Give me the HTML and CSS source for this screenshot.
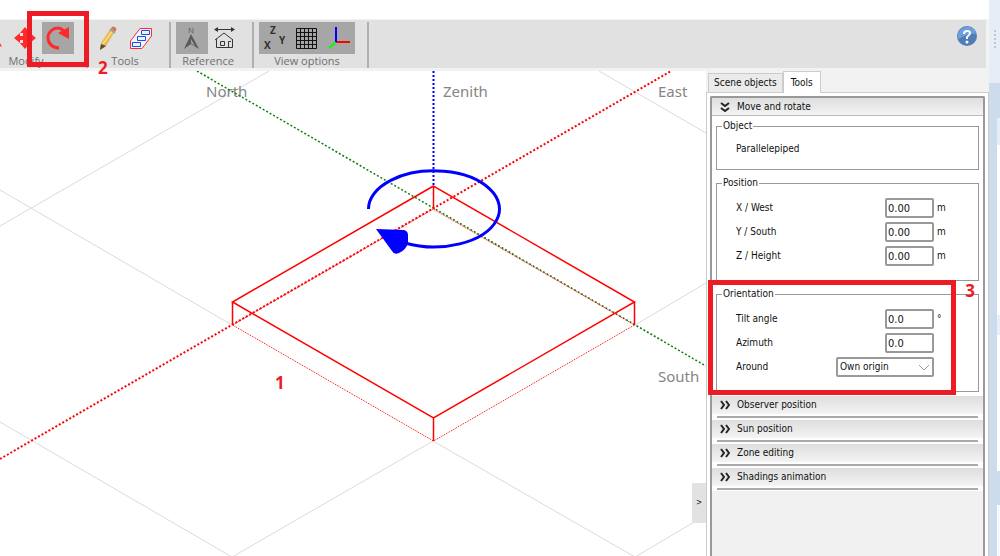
FILE: index.html
```
<!doctype html>
<html lang="en">
<head>
<meta charset="utf-8">
<title>Scene editor</title>
<link rel="stylesheet" href="styles.css">
</head>

<body>
<div class="app">
	<div class="topbar"></div>
	<div class="toolbar">
		<div class="group group_cut">
			<div class="btns">
				<button type="button" aria-label="Select"><svg width="32" height="32"><path d="M18 13L24 25L20 23L16 26z" fill="#ff2a2a"/></svg></button>
				<button type="button" aria-label="Move"><svg width="32" height="32"><path d="M15 5L20 11H17V14H20V11L26 16L20 21V18H17V21H20L15 27L10 21H13V18H10V21L4 16L10 11V14H13V11H10z" fill="#ff2a2a"/></svg></button>
				<span class="marked">
					<button type="button" class="on" aria-label="Rotate"><svg width="32" height="32"><path d="M17 26C11 26 6 22 6 16C6 10 11 6 16 6Q19 6 22 9" fill="none" stroke="#ff2a2a" stroke-width="3"/><path d="M27 5V17L16 11z" fill="#ff2a2a"/></svg></button>
					<i class="mark mark_rotate"></i><b class="num num_rotate">2</b>
				</span>
			</div>
			<span class="caption">Modify</span>
		</div>
		<div class="group">
			<div class="btns">
				<button type="button" aria-label="Edit"><svg width="32" height="32"><path d="M8 21L18 6L22 9L13 24L7 28z" fill="#e8b84a"/><path d="M10 22L20 8" stroke="#f7da83" stroke-width="2"/><path d="M18 6Q20 3 23 6Q24 8 22 10z" fill="#d9704c"/><path d="M17 7L22 11" stroke="#9aa0a8" stroke-width="2"/><path d="M8 22L13 24L7 28z" fill="#5d4b33"/></svg></button>
				<button type="button" aria-label="Zones"><svg width="32" height="32" fill="#edf3ff"><path d="M5.500 19L15 6.500H26.500V14L17 26.500H5.500z" stroke="#ff2a2a"/><path d="M16.500 8.500H24.500V12.500H16.500zM12.500 14.500H20.500V18.500H12.500zM7.500 20.500H15.500V24.500H7.500z" stroke="#1a4fe0"/></svg></button>
			</div>
			<span class="caption">Tools</span>
		</div>
		<div class="group">
			<div class="btns">
				<button type="button" class="on" aria-label="North"><svg width="32" height="32"><text x="12" y="11" class="letter_n">N</text><path d="M15 12L23 27L15 22L8 27z" fill="#5a5a5a"/><path d="M15 17V21L19 24z" fill="#a6a6a6"/></svg></button>
				<button type="button" aria-label="Building"><svg width="32" height="32" fill="none" stroke="#37372f"><path d="M7 7.500H26"/><path d="M6 7.500L10 5V10zM27 7.500L23 5V10z" fill="#37372f" stroke="none"/><path d="M7 18L16 11L25 18M8.500 17V25.500H24.500V17M20.500 25V19.500H23M12.500 19.500H16.500V23.500H12.500z"/></svg></button>
			</div>
			<span class="caption">Reference</span>
		</div>
		<div class="group">
			<div class="btns">
				<button type="button" class="on" aria-label="Axis letters"><svg width="32" height="32" class="letters"><text x="11" y="12">Z</text><text x="5" y="27">X</text><text x="20" y="22">Y</text></svg></button>
				<button type="button" class="on" aria-label="Grid"><svg width="32" height="32"><path d="M5.500 6.500H25.500V26.500H5.500zM9.500 6V26M13.500 6V26M17.500 6V26M21.500 6V26M5 10.500H25M5 14.500H25M5 18.500H25M5 22.500H25" fill="none" stroke="#111"/></svg></button>
				<button type="button" class="on" aria-label="Axes"><svg width="32" height="32" fill="none" stroke-width="2"><path d="M13 20L6 26" stroke="#0f0"/><path d="M13 20H27" stroke="#f00"/><path d="M13 5V20" stroke="#00f"/></svg></button>
			</div>
			<span class="caption">View options</span>
		</div>
		<button type="button" class="help" aria-label="Help"><svg width="20" height="20"><circle cx="10" cy="10" r="10" fill="#4f7db5"/><path d="M1 13A10 10 0 0 1 17 3Q19 5 19 8Q12 7 1 13z" fill="#6f9fda"/><path d="M7 8Q7 5 10 5Q13 5 13 7Q13 9 10 11V13" fill="none" stroke="#fff" stroke-width="2"/><circle cx="10" cy="16" r="1.500" fill="#fff"/></svg></button>
	</div>

	<div class="main">
		<div class="view">
			<svg class="scene" viewBox="0 71 706 485" preserveAspectRatio="xMidYMid slice">
				<!-- ground grid -->
				<g class="grid">
					<path d="M0 190L232 325M0 226L269 71M0 422L232 557L433 441L635 557L706 515M635 325L706 283M599 71L706 133"/>
				</g>
				<text x="206" y="97">North</text>
				<text x="443" y="97">Zenith</text>
				<text x="658" y="97">East</text>
				<text x="658" y="382">South</text>
				<!-- axes -->
				<path class="axis green" d="M197 71L706 366"/>
				<path class="axis red" d="M0 459L671 71"/>
				<path class="axis blue" d="M433.500 71V186"/>
				<!-- parallelepiped -->
				<path class="hidden" d="M433 209L232.500 325L433.500 441L634.500 325z"/>
				<path class="edge" d="M433.500 186L232.500 302L433.500 418L634.500 302zM433.500 186V208M232.500 302V325M433.500 418V441M634.500 302V325"/>
				<!-- rotation handle -->
				<path class="turn" d="M368.500 209A65.500 38 0 1 1 405 243"/>
				<path class="head" d="M376 229L404 230Q408 231 408 235L408 243Q406 250 399 253Q394 255 392 251z"/>
				<text class="step" x="275" y="389">1</text>
			</svg>
			<button type="button" class="fold" aria-label="Hide panel">&gt;</button>
		</div>

		<div class="panel">
			<div class="tabs">
				<button type="button">Scene objects</button>
				<button type="button" class="active">Tools</button>
			</div>
			<div class="page">
				<div class="frame">
					<button type="button" class="title open"><svg width="10" height="10"><path d="M1 1L5 4L9 1M1 6L5 9L9 6"/></svg>Move and rotate</button>
					<div class="content">
						<fieldset class="object">
							<legend>Object</legend>
							<div class="row">Parallelepiped</div>
						</fieldset>
						<fieldset>
							<legend>Position</legend>
							<div class="row"><label for="px">X / West</label><input type="text" id="px" value="0.00"><span class="unit">m</span></div>
							<div class="row"><label for="py">Y / South</label><input type="text" id="py" value="0.00"><span class="unit">m</span></div>
							<div class="row"><label for="pz">Z / Height</label><input type="text" id="pz" value="0.00"><span class="unit">m</span></div>
						</fieldset>
						<div class="marked">
							<fieldset>
								<legend>Orientation</legend>
								<div class="row"><label for="tilt">Tilt angle</label><input type="text" id="tilt" value="0.0"><span class="unit">°</span></div>
								<div class="row"><label for="azi">Azimuth</label><input type="text" id="azi" value="0.0"><span class="unit"></span></div>
								<div class="row"><label for="around">Around</label><span class="drop"><select id="around"><option>Own origin</option></select><svg width="12" height="8"><path d="M1 1L6 6L11 1"/></svg></span><span class="unit"></span></div>
							</fieldset>
							<i class="mark mark_orient"></i><b class="num num_orient">3</b>
						</div>
					</div>
					<div class="item"><button type="button" class="title"><svg width="10" height="10"><path d="M1 1L4 5L1 9M6 1L9 5L6 9"/></svg>Observer position</button></div>
					<div class="item"><button type="button" class="title"><svg width="10" height="10"><path d="M1 1L4 5L1 9M6 1L9 5L6 9"/></svg>Sun position</button></div>
					<div class="item"><button type="button" class="title"><svg width="10" height="10"><path d="M1 1L4 5L1 9M6 1L9 5L6 9"/></svg>Zone editing</button></div>
					<div class="item"><button type="button" class="title"><svg width="10" height="10"><path d="M1 1L4 5L1 9M6 1L9 5L6 9"/></svg>Shadings animation</button></div>
				</div>
			</div>
		</div>
	</div>
</div>
<div class="side">
	<div class="grip"><i></i><i></i><i></i><i></i><i></i></div>
	<div class="rail"></div>
</div>
</body>
</html>
```

FILE: styles.css
```
*{ margin:0; padding:0; box-sizing:border-box;}
body{ display:flex; height:100vh; overflow:hidden; background:#fff; color:#111; font:10px/14px "DejaVu Sans Condensed","Noto Sans",sans-serif;}
button,input,select{ font:inherit; color:inherit; border:none; background:none;}
svg{ display:block;}

.app{ flex:1; min-width:0; display:flex; flex-direction:column; background:#f2f2f2;}
.topbar{ height:20px; background:#fff; border-bottom:1px solid #f2f2f2;}

.toolbar{ display:flex; height:48px; padding-top:2px; margin-right:3px; background:#e1e1e1;}
.group{ padding:0 12px 0 5px; border-right:2px solid #b0b0b0; text-align:center;}
.group_cut{ margin-left:-27px;}
.btns{ display:flex;}
.btns button{ display:block; width:32px; height:32px;}
.btns .on{ background:#a6a6a6;}
.letters{ font:bold 10px/10px "Open Sans",sans-serif; fill:#30302a;}
.letter_n{ font:8px/8px "Open Sans",sans-serif; fill:#555;}
.caption{ display:block; font:11px/14px "Open Sans",sans-serif; color:#6e6e6e; white-space:nowrap;}
.help{ align-self:flex-start; margin:4px 9px 0 auto;}

/* red callouts */
.marked{ position:relative;}
.mark{ position:absolute; z-index:2; border:5px solid #ed1c24; pointer-events:none;}
.mark_rotate{ left:-15px; right:-15px; top:-11px; bottom:-13px;}
.mark_orient{ left:-8px; right:23px; top:-7px; bottom:-3px;}
.num{ position:absolute; z-index:2; font:bold 17px/18px "Open Sans",sans-serif; color:#ed1c24;}
.num_rotate{ left:56px; top:37px;}
.num_orient{ right:4px; top:-5px;}

.main{ flex:1; display:flex; min-height:0; margin-top:3px;}
.view{ flex:1; min-width:0; position:relative; background:#fff;}
.scene{ width:100%; height:100%;}
.scene path{ fill:none;}
.scene text{ font:15px "Noto Sans",sans-serif; fill:#858585;}
.scene .step{ font:bold 17px "Open Sans",sans-serif; fill:#ed1c24;}
.grid path{ stroke:#dadada;}
.axis{ stroke-width:1.5; stroke-dasharray:2 2;}
.green{ stroke:#0a800a;}
.red{ stroke:#f00; stroke-width:2;}
.blue{ stroke:#00f; stroke-width:2;}
.scene .hidden{ stroke:#f00; stroke-dasharray:1 1;}
.scene .edge{ stroke:#f00; stroke-width:1.5;}
.scene .turn{ stroke:#00f; stroke-width:3;}
.scene .head{ fill:#00f;}
.fold{ position:absolute; right:0; bottom:33px; width:14px; height:40px; background:#e2e2e2; font-size:8px;}

.panel{ width:283px; display:flex; flex-direction:column;}
.tabs{ display:flex; align-items:flex-end; height:21px; padding-left:2px;}
.tabs button{ height:19px; padding:0 5px; border:1px solid #ccc; border-bottom:none; background:#ebebeb;}
.tabs .active{ height:22px; padding:0 7px; margin-bottom:-1px; background:#fff; position:relative; z-index:1;}
.page{ flex:1; min-height:0; padding:3px 3px 0; border:1px solid #ccc; border-bottom:none; background:#fff;}
.frame{ height:100%; border:2px solid #999; border-bottom:none; border-radius:2px 2px 0 0; background:#f1f1f1;}

.title{ display:flex; align-items:center; width:100%; height:18px; padding-left:8px; gap:7px; background:linear-gradient(#dedede,#f3f3f3);}
.title svg{ fill:none; stroke:#222; stroke-width:2;}
.open{ border-bottom:1px solid #bbb;}
.content{ display:flex; flex-direction:column; gap:6px; padding:3px 4px; background:#fff;}
.item{ height:24px; padding-top:1px; display:flex; flex-direction:column; gap:2px; background:#fff;}
.item:after{ content:""; height:2px; margin:0 5px; background:#aaa;}

fieldset{ padding:6px 0 12px 19px; border:1px solid #999;}
.object{ padding:4px 0 8px 19px;}
legend{ margin-left:-14px; padding:0 1px;}
.row{ display:flex; align-items:center; height:24px;}
.row label{ flex:1;}
.row input,.row select{ height:20px; border:2px solid #999; border-radius:2px; background:#fff;}
.row input{ width:49px; padding-left:1px; font-size:11px;}
.drop{ position:relative;}
.drop select{ display:block; width:98px; padding-left:2px; appearance:none;}
.drop svg{ position:absolute; right:4px; top:7px; fill:none; stroke:#999; pointer-events:none;}
.unit{ width:44px; padding-left:3px;}

.side{ width:11px; display:flex; flex-direction:column;}
.grip{ height:83px; padding:30px 0 0 5px; display:flex; flex-direction:column; gap:2px; background:#e6edf6;}
.grip i{ width:2px; height:2px; background:#bcc8d2;}
.rail{ flex:1; border-left:8px solid #cddcec; background:linear-gradient(#cddcec 35px,#e6edf6 35px,#e6edf6 62px,#fff 62px,#fff 232px,#eaf0fa 232px,#eaf0fa 252px,#fff 252px,#fff 388px,#cddcec 388px,#cddcec 422px,#f8fbfe 422px);}
```
